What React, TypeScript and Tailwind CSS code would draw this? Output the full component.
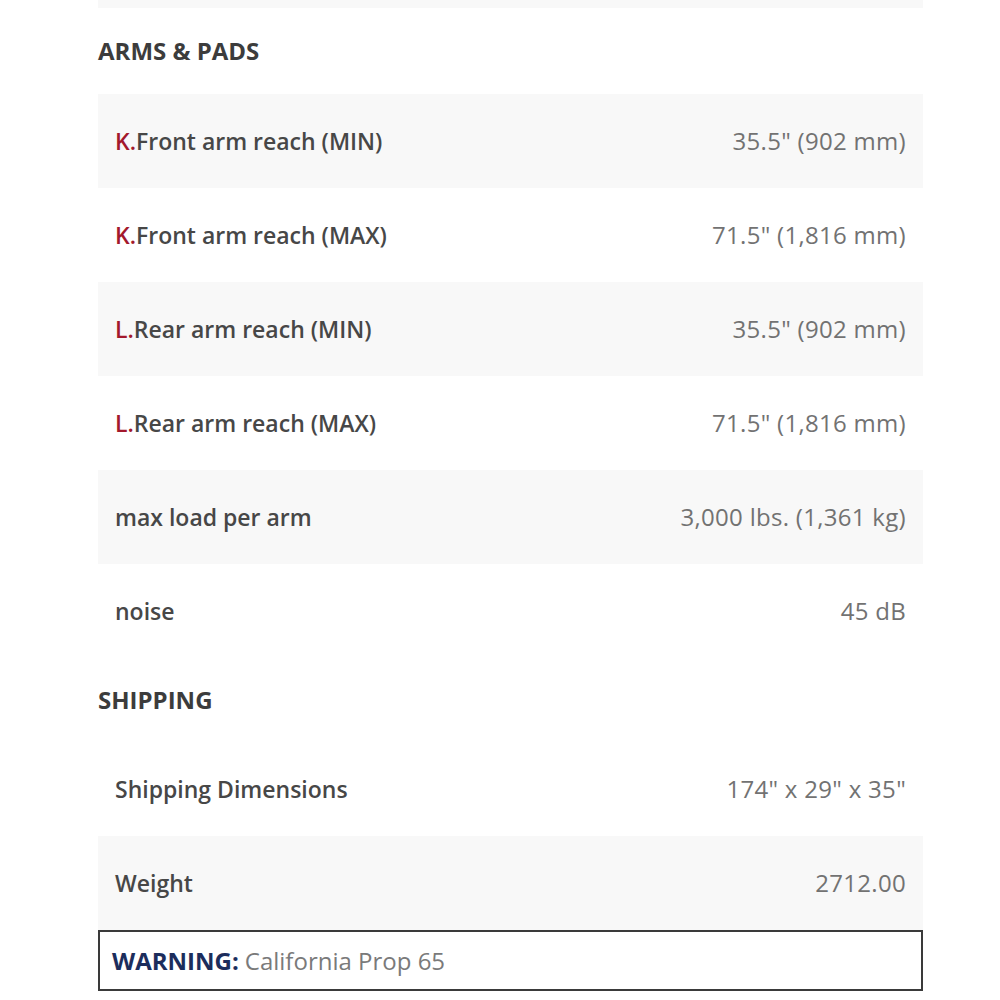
import React from "react";

type Row = { letter?: string; label: string; value: string };

const arms: Row[] = [
  { letter: "K.", label: "Front arm reach (MIN)", value: '35.5" (902 mm)' },
  { letter: "K.", label: "Front arm reach (MAX)", value: '71.5" (1,816 mm)' },
  { letter: "L.", label: "Rear arm reach (MIN)", value: '35.5" (902 mm)' },
  { letter: "L.", label: "Rear arm reach (MAX)", value: '71.5" (1,816 mm)' },
  { label: "max load per arm", value: "3,000 lbs. (1,361 kg)" },
  { label: "noise", value: "45 dB" },
];

const shipping: Row[] = [
  { label: "Shipping Dimensions", value: '174" x 29" x 35"' },
  { label: "Weight", value: "2712.00" },
];

const SpecRow = ({ row, shaded }: { row: Row; shaded: boolean }) => (
  <div
    className={`flex h-[94px] items-center justify-between px-[17px] ${
      shaded ? "bg-[#f8f8f8]" : "bg-white"
    }`}
  >
    <span className="text-[23px] font-semibold text-[#474747]">
      {row.letter && <span className="text-[#a3182c]">{row.letter}</span>}
      {row.label}
    </span>
    <span className="text-[24px] font-normal tracking-[0.3px] text-[#727272]">{row.value}</span>
  </div>
);

export default function App() {
  return (
    <div className="min-h-screen bg-white font-['Open_Sans',sans-serif]">
      <div className="ml-[98px] w-[825px]">
        <div className="h-[8px] bg-[#f8f8f8]" />

        {/* arms & pads */}
        <h3 className="flex h-[86px] items-center text-[24px] font-bold text-[#3c3c3c]">
          ARMS &amp; PADS
        </h3>
        <div>
          {arms.map((r, i) => (
            <SpecRow key={i} row={r} shaded={i % 2 === 0} />
          ))}
        </div>

        {/* shipping */}
        <h3 className="flex h-[84px] items-center text-[24px] font-bold text-[#3c3c3c]">
          SHIPPING
        </h3>
        <div>
          {shipping.map((r, i) => (
            <SpecRow key={i} row={r} shaded={i % 2 === 1} />
          ))}
        </div>

        <div className="flex h-[61px] items-center border-2 border-[#3a3a3a] px-[12px] text-[24px]">
          <span className="font-bold text-[#1c2d5c]">WARNING:</span>
          <span className="ml-[6px] font-normal text-[#7a7a7a]">California Prop 65</span>
        </div>
      </div>
    </div>
  );
}
